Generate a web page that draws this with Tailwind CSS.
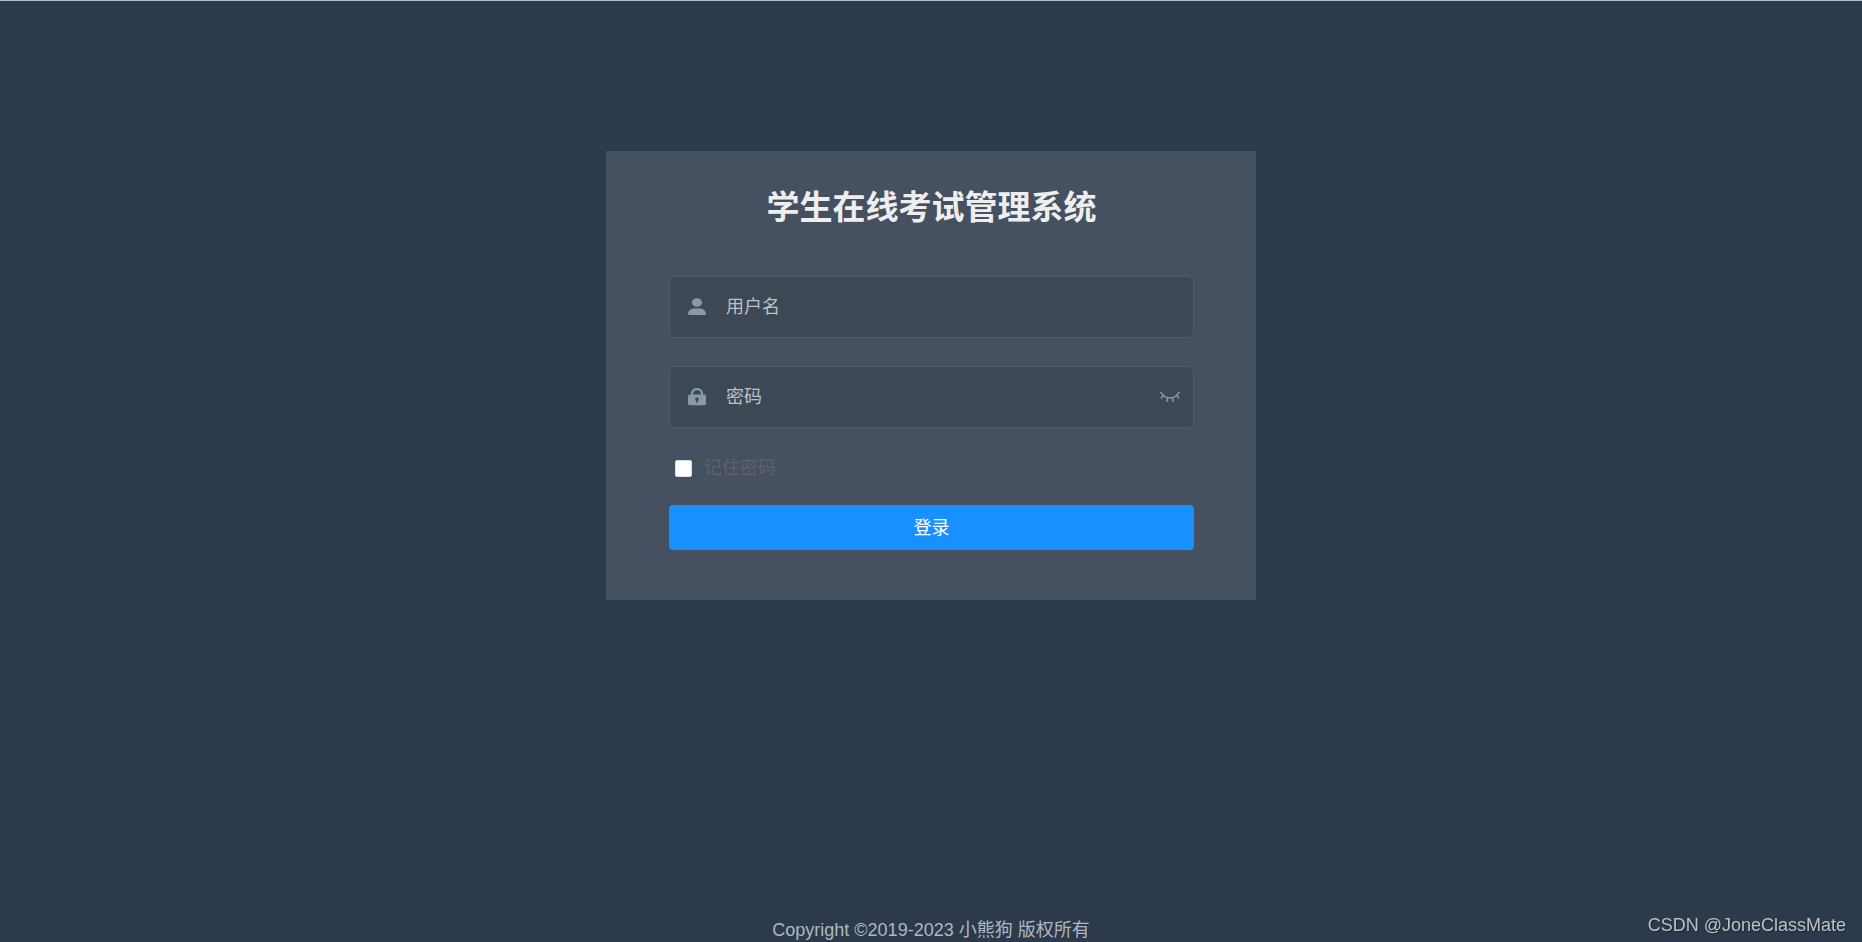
<!DOCTYPE html>
<html lang="zh-CN">
<head>
    <meta charset="UTF-8">
    <meta name="viewport" content="width=device-width, initial-scale=1.0">
    <title>学生在线考试管理系统</title>
    <script src="https://cdn.jsdelivr.net/npm/@tailwindcss/browser@4"></script>
</head>
<body class="min-h-screen flex flex-col items-center bg-[#2d3a4b] border-t border-[#b3c0cb] font-['Liberation_Sans','Noto_Sans_CJK_SC',sans-serif] text-[18px] leading-6">

    <!-- Login Form -->
    <main class="w-full max-w-[650px] mt-[150px] pl-[63px] pr-[62px] pt-[33px] pb-[50px] bg-[#455060]">
        <h1 class="mb-11 text-center text-[33px] leading-[48px] font-bold text-[#eeeeee]">学生在线考试管理系统</h1>

        <form onsubmit="return false">
            <div class="flex items-center h-[62px] mb-7 pl-[18px] pr-[13px] bg-[#3e4854] border border-[#505b69] rounded-md">
                <svg class="w-[18px] h-[18px] shrink-0 fill-[#889aa4]" viewBox="0 0 18 18" aria-hidden="true">
                    <ellipse cx="9" cy="4.5" rx="5.1" ry="4.3" />
                    <path d="M0 16.1C0 12.5 3.2 10.4 6.2 10.4h5.6c3 0 6.2 2.1 6.2 5.7 0 .5-.4.9-.9.9H.9c-.5 0-.9-.4-.9-.9z" />
                </svg>
                <input type="text" id="username" aria-label="用户名" placeholder="用户名"
                    class="w-full ml-5 bg-transparent text-white placeholder:text-[#b8c2cc] outline-none" />
            </div>

            <div class="flex items-center h-[62px] mb-7 pl-[18px] pr-[13px] bg-[#3e4854] border border-[#505b69] rounded-md">
                <svg class="w-[18px] h-[18px] shrink-0" viewBox="0 0 18 18" aria-hidden="true">
                    <path d="M4 8V5.5C4 2.8 6.2 1.2 9 1.2S14 2.8 14 5.5V8" fill="none" stroke="#889aa4" stroke-width="2.2" />
                    <rect y="6.6" width="18" height="10.6" rx="1.8" fill="#889aa4" />
                    <path d="M9 9.4a1.8 1.8 0 0 1 .8 3.4v2H8.2v-2A1.8 1.8 0 0 1 9 9.4z" fill="#3e4854" />
                </svg>
                <input type="password" id="password" aria-label="密码" placeholder="密码"
                    class="w-full ml-5 bg-transparent text-white placeholder:text-[#b8c2cc] outline-none" />
                <button type="button" onclick="togglePassword()" aria-label="显示密码" class="shrink-0 cursor-pointer">
                    <svg class="w-5 h-3" viewBox="0 0 20 12" fill="none" stroke="#889aa4" stroke-width="1.5" stroke-linecap="round">
                        <path d="M.8 1.3C5.6 8.7 14.4 8.7 19.2 1.3" />
                        <path d="M3.2 4.4L1.4 7M7.6 6.8L6.9 10.3M12.4 6.8l.7 3.5M16.8 4.4l1.8 2.6" />
                    </svg>
                </button>
            </div>

            <div class="flex items-center h-6 mb-[25px] pl-1.5">
                <input type="checkbox" id="remember" class="size-[17px] appearance-none rounded-xs bg-white border border-[#dcdfe6] checked:bg-[#1890ff]" />
                <label for="remember" class="pl-3 text-[#606266]">记住密码</label>
            </div>

            <button type="submit" class="block w-full h-[45px] rounded-sm bg-[#1890ff] text-white cursor-pointer">登录</button>
        </form>
    </main>

    <!-- Footer -->
    <footer class="mt-auto text-[#b0b7c0]">Copyright ©2019-2023 小熊狗 版权所有</footer>

    <!-- Watermark -->
    <div class="fixed right-4 bottom-[5px] text-[#bec1c4] text-shadow-[1px_1px_1px_#1c2530]">CSDN @JoneClassMate</div>

    <script>
        function togglePassword() {
            const input = document.getElementById('password');
            input.type = input.type === 'password' ? 'text' : 'password';
        }
    </script>
</body>
</html>
